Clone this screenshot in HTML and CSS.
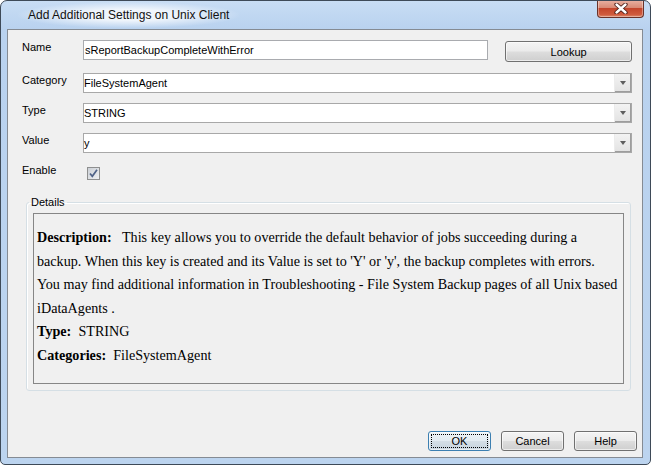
FILE: index.html
```html
<!DOCTYPE html>
<html lang="en">
<head>
  <meta charset="UTF-8">
  <title>Add Additional Settings on Unix Client</title>
  <link rel="stylesheet" href="styles.css">
</head>
<body>
  <div class="window">
    <div class="titlebar">
      <span class="title">Add Additional Settings on Unix Client</span>
      <div class="close">
        <svg width="14" height="11" viewBox="0 0 14 11">
          <path d="M2.5 1.5 L11.5 9.5 M11.5 1.5 L2.5 9.5" stroke="#4a1c16" stroke-width="4.2" stroke-linecap="round"/>
          <path d="M2.5 1.5 L11.5 9.5 M11.5 1.5 L2.5 9.5" stroke="#fff" stroke-width="2.4" stroke-linecap="round"/>
        </svg>
      </div>
    </div>

    <div class="client">
      <div class="row row-name">
        <label>Name</label>
        <div class="textbox">sReportBackupCompleteWithError</div>
        <button class="btn lookup">Lookup</button>
      </div>

      <div class="row">
        <label>Category</label>
        <div class="combo"><span class="value">FileSystemAgent</span><span class="arrow"></span></div>
      </div>

      <div class="row">
        <label>Type</label>
        <div class="combo"><span class="value">STRING</span><span class="arrow"></span></div>
      </div>

      <div class="row">
        <label>Value</label>
        <div class="combo"><span class="value">y</span><span class="arrow"></span></div>
      </div>

      <div class="row row-check">
        <label>Enable</label>
        <span class="check">
          <svg width="11" height="11" viewBox="0 0 11 11">
            <path d="M2 5.5 L4.3 8.3 L9 1.8" fill="none" stroke="#4f6287" stroke-width="1.7"/>
          </svg>
        </span>
      </div>

      <fieldset class="details">
        <legend>Details</legend>
        <div class="details-box">
          <p><b>Description:</b>&nbsp;&nbsp; This key allows you to override the default behavior of jobs succeeding during a backup. When this key is created and its Value is set to 'Y' or 'y', the backup completes with errors. You may find additional information in Troubleshooting - File System Backup pages of all Unix based iDataAgents .</p>
          <p><b>Type:</b>&nbsp; STRING</p>
          <p><b>Categories:</b>&nbsp; FileSystemAgent</p>
        </div>
      </fieldset>

      <div class="buttons">
        <button class="btn default">OK</button>
        <button class="btn">Cancel</button>
        <button class="btn">Help</button>
      </div>
    </div>
  </div>
</body>
</html>
```

FILE: styles.css
```css
* {
  box-sizing: border-box;
}

body {
  margin: 0;
  background: #fff;
  font-family: 'Liberation Sans', Arial, sans-serif;
  font-size: 11px;
  color: #000;
}

.window {
  width: 651px;
  height: 465px;
  border: 1px solid #3e4a58;
  border-radius: 7px 7px 5px 5px;
  background: linear-gradient(to bottom, #c8ddf4 0, #b9d2ef 28px, #bcd4ef 100%);
  display: flex;
  flex-direction: column;
  overflow: hidden;
}

.titlebar {
  height: 28px;
  display: flex;
  justify-content: space-between;
  align-items: center;
}

.title {
  margin-left: 17px;
  padding: 6px 10px;
  font-size: 12px;
  color: #111;
  background: radial-gradient(ellipse at center, rgba(255, 255, 255, .75) 30%, rgba(255, 255, 255, 0) 72%);
}

.close {
  align-self: flex-start;
  width: 47px;
  height: 18px;
  margin-right: 6px;
  margin-top: -1px;
  border: 1px solid #6a3229;
  border-top: none;
  border-radius: 0 0 4px 4px;
  background: linear-gradient(to bottom, #eab2a3 0, #d98a75 45%, #c4452b 50%, #cf5a3d 85%, #dd8a6e 100%);
  box-shadow: inset 0 0 0 1px rgba(255, 255, 255, .35);
  display: flex;
  justify-content: center;
  align-items: center;
}

.client {
  flex: 1;
  margin: 0 7px 6px 6px;
  border: 1px solid #858b93;
  background: #f0f0f0;
  display: flex;
  flex-direction: column;
  padding: 10px 10px 6px 14px;
}

.row {
  display: flex;
  align-items: flex-start;
  height: 20px;
  margin-bottom: 10px;
}

.row label {
  width: 61px;
  flex-shrink: 0;
  padding-top: 1px;
  line-height: 13px;
}

.row-name {
  height: 22px;
  margin-bottom: 11px;
}

.row-check {
  margin-bottom: 0;
}

.textbox {
  width: 406px;
  height: 20px;
  border: 1px solid #a9abaf;
  background: #fff;
  padding-left: 1px;
  line-height: 18px;
}

.combo {
  flex: 1;
  height: 20px;
  border: 1px solid #a8a8a8;
  background: #fff;
  display: flex;
}

.combo .value {
  flex: 1;
  line-height: 18px;
}

.combo .arrow {
  width: 17px;
  background: linear-gradient(to bottom, #f3f3f3, #e2e2e2);
  border-left: 1px solid #ececec;
  box-shadow: inset -1px -1px 0 #9d9d9d;
  display: flex;
  justify-content: center;
  align-items: center;
}

.combo .arrow::before {
  content: '';
  border-left: 3.5px solid transparent;
  border-right: 3.5px solid transparent;
  border-top: 4px solid #5e5e5e;
  margin-top: -1px;
}

.row-check .check {
  width: 13px;
  height: 13px;
  margin: 4px 0 0 4px;
  border: 1px solid #8e8f8f;
  background: linear-gradient(135deg, #ccd0d6, #eef0f2);
  display: flex;
  justify-content: center;
  align-items: center;
}

.details {
  margin: 12px 1px 0 4px;
  padding: 4px 6px 6px 6px;
  border: 1px solid #d5dfe5;
  border-radius: 3px;
  box-shadow: inset 1px 1px 0 #fff;
}

.details legend {
  margin-left: -4px;
  padding: 0 2px;
  line-height: 14px;
}

.details-box {
  height: 171px;
  border: 1px solid #868686;
  background: #f0f0f0;
  padding: 12px 3px;
  font-family: 'Liberation Serif', 'Times New Roman', serif;
  font-size: 14.15px;
  line-height: 23.6px;
}

.details-box p {
  margin: 0;
}

.btn {
  height: 20px;
  padding: 0;
  border: 1px solid #707070;
  border-radius: 3px;
  background: linear-gradient(to bottom, #f4f4f4 0, #ebebeb 48%, #dddddd 52%, #cfcfcf 100%);
  box-shadow: inset 0 0 0 1px rgba(255, 255, 255, .6);
  font-family: 'Liberation Sans', Arial, sans-serif;
  font-size: 11px;
  color: #000;
}

.lookup {
  width: 127px;
  height: 21px;
  margin: 1px 0 0 17px;
}

.buttons {
  margin-top: auto;
  margin-right: -5px;
  display: flex;
  justify-content: flex-end;
  gap: 10px;
}

.buttons .btn {
  width: 63px;
}

.btn.default {
  border-color: #3c7fb1;
  background: linear-gradient(to bottom, #eef4f8 0, #e3ebf1 48%, #d4dee6 52%, #c8d4de 100%);
  outline: 1px dotted #000;
  outline-offset: -4px;
}
```
